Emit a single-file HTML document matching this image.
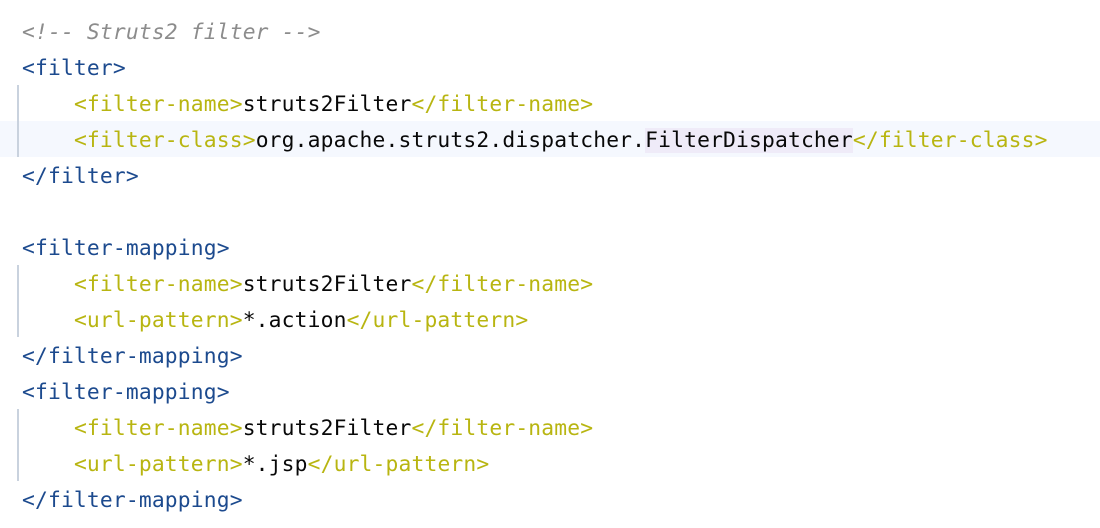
<!DOCTYPE html>
<html><head><meta charset="utf-8"><style>
body{margin:0;width:1100px;height:528px;background:#fff;overflow:hidden;position:relative}
.code{position:absolute;left:22px;top:15px;font-family:"DejaVu Sans Mono","Liberation Mono",monospace;font-size:21.3px;line-height:36px;white-space:pre;color:#080808;letter-spacing:0.16px}
.c{color:#8c8c8c;font-style:italic}
.t{color:#1c4a8e}
.y{color:#b8b511}
.hl{position:absolute;left:0;top:121px;width:1100px;height:36px;background:#f5f8fe}
.hw{background:#efebf8}
.g{position:absolute;left:17px;width:2px;background:#c9d2de}
</style></head><body>
<div class="hl"></div>
<div class="g" style="top:85px;height:72px"></div>
<div class="g" style="top:265px;height:72px"></div>
<div class="g" style="top:409px;height:72px"></div>
<div class="code"><span class="c">&lt;!-- Struts2 filter --&gt;</span>
<span class="t">&lt;filter&gt;</span>
    <span class="y">&lt;filter-name&gt;</span>struts2Filter<span class="y">&lt;/filter-name&gt;</span>
    <span class="y">&lt;filter-class&gt;</span>org.apache.struts2.dispatcher.<span class="hw">FilterDispatcher</span><span class="y">&lt;/filter-class&gt;</span>
<span class="t">&lt;/filter&gt;</span>

<span class="t">&lt;filter-mapping&gt;</span>
    <span class="y">&lt;filter-name&gt;</span>struts2Filter<span class="y">&lt;/filter-name&gt;</span>
    <span class="y">&lt;url-pattern&gt;</span>*.action<span class="y">&lt;/url-pattern&gt;</span>
<span class="t">&lt;/filter-mapping&gt;</span>
<span class="t">&lt;filter-mapping&gt;</span>
    <span class="y">&lt;filter-name&gt;</span>struts2Filter<span class="y">&lt;/filter-name&gt;</span>
    <span class="y">&lt;url-pattern&gt;</span>*.jsp<span class="y">&lt;/url-pattern&gt;</span>
<span class="t">&lt;/filter-mapping&gt;</span></div>
</body></html>
